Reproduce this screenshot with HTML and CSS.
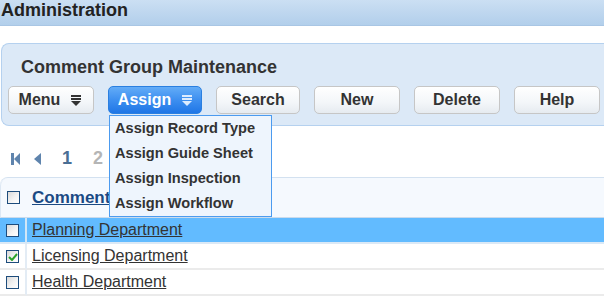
FILE: index.html
```html
<!DOCTYPE html>
<html lang="en">
<head>
    <meta charset="UTF-8">
    <title>Comment Group Maintenance</title>
    <link rel="stylesheet" href="styles.css">
</head>
<body>
    <div class="page-header">Administration</div>

    <div class="panel">
        <h2 class="panel-title">Comment Group Maintenance</h2>
        <div class="toolbar">
            <button class="btn btn-menu">Menu <svg class="caret" width="10" height="11" viewBox="0 0 10 11"><rect x="0" y="0" width="10" height="2"/><rect x="0" y="3" width="10" height="2"/><polygon points="0,6 10,6 5,11"/></svg></button>
            <div class="btn-wrap">
                <button class="btn btn-assign">Assign <svg class="caret" width="10" height="11" viewBox="0 0 10 11"><rect x="0" y="0" width="10" height="2"/><rect x="0" y="3" width="10" height="2"/><polygon points="0,6 10,6 5,11"/></svg></button>
                <ul class="dropdown">
                    <li>Assign Record Type</li>
                    <li>Assign Guide Sheet</li>
                    <li>Assign Inspection</li>
                    <li>Assign Workflow</li>
                </ul>
            </div>
            <button class="btn btn-search">Search</button>
            <button class="btn">New</button>
            <button class="btn">Delete</button>
            <button class="btn">Help</button>
        </div>
    </div>

    <div class="pager">
        <svg class="pg-icon" width="9" height="12" viewBox="0 0 9 12"><rect x="0" y="0" width="3" height="12"/><polygon points="9,0 9,12 3,6"/></svg>
        <svg class="pg-icon pg-prev" width="7" height="12" viewBox="0 0 7 12"><polygon points="7,0 7,12 0,6"/></svg>
        <span class="pg-num current">1</span>
        <span class="pg-num">2</span>
    </div>

    <table class="grid">
        <thead>
            <tr>
                <th class="col-check"><span class="checkbox"></span></th>
                <th><a href="#">Comment Group Name</a></th>
            </tr>
        </thead>
        <tbody>
            <tr class="selected">
                <td class="col-check"><span class="checkbox"></span></td>
                <td><a href="#">Planning Department</a></td>
            </tr>
            <tr>
                <td class="col-check"><span class="checkbox checked"><svg width="10" height="8" viewBox="0 0 10 8"><polyline points="1,4 4,7 9,1"/></svg></span></td>
                <td><a href="#">Licensing Department</a></td>
            </tr>
            <tr>
                <td class="col-check"><span class="checkbox"></span></td>
                <td><a href="#">Health Department</a></td>
            </tr>
        </tbody>
    </table>
</body>
</html>
```

FILE: styles.css
```css
* {
    margin: 0;
    padding: 0;
    box-sizing: border-box;
}

body {
    font-family: 'Liberation Sans', Arial, sans-serif;
    color: #333;
    background: white;
    width: 604px;
    overflow: hidden;
}

.page-header {
    height: 26px;
    padding-left: 1px;
    line-height: 20px;
    font-size: 18px;
    font-weight: bold;
    color: #222;
    background: linear-gradient(#cbdff3 0%, #bcd5ee 60%, #b2cfeb 100%);
    border-bottom: 1px solid #a9c6e4;
}

.panel {
    margin: 17px 0 0 1px;
    padding: 13px 0 11px 6px;
    background: #dce9f7;
    border: 1px solid #b5d1ef;
    border-right: none;
    border-radius: 8px 0 0 8px;
}

.panel-title {
    padding-left: 13px;
    font-size: 18px;
    line-height: 20px;
    font-weight: bold;
    color: #333;
    margin-bottom: 9px;
}

.toolbar {
    display: flex;
    gap: 14px;
}

.btn-wrap {
    position: relative;
}

.btn {
    height: 28px;
    width: 86px;
    font-family: inherit;
    font-size: 16px;
    font-weight: bold;
    color: #333;
    background: linear-gradient(#ffffff 0%, #f3f6f9 60%, #e6ebf0 100%);
    border: 1px solid #c6c6c6;
    border-radius: 5px;
    display: flex;
    align-items: center;
    justify-content: center;
    gap: 11px;
}

.btn-menu {
    padding-right: 2px;
}

.btn-assign {
    width: 94px;
    color: white;
    background: linear-gradient(#63acf7 0%, #3d8ff0 50%, #1f76e6 100%);
    border-color: #2a7fe0;
}

.btn-search {
    width: 84px;
}

.caret {
    fill: #333;
}

.btn-assign .caret {
    fill: #dcecff;
}

.dropdown {
    position: absolute;
    top: 29px;
    left: 1px;
    width: 163px;
    list-style: none;
    background: #eef5fd;
    border: 1px solid #4c9bef;
    padding: 0 0 0 5px;
    z-index: 10;
}

.dropdown li {
    height: 25px;
    line-height: 25px;
    font-size: 14.6px;
    font-weight: bold;
    color: #333;
    white-space: nowrap;
}

.pager {
    display: flex;
    align-items: center;
    height: 51px;
    padding: 14px 0 0 11px;
}

.pg-icon {
    fill: #5f84ad;
}

.pg-prev {
    margin-left: 14px;
}

.pg-num {
    font-size: 18px;
    font-weight: bold;
    color: #b5b5b5;
    margin-left: 21px;
}

.pg-num.current {
    color: #4a6e94;
}

.grid {
    width: 100%;
    border-collapse: separate;
    border-spacing: 0;
    border-top: 1px solid #d3e1f0;
    border-radius: 8px 0 0 0;
}

.grid th {
    height: 40px;
    background: #f5f9fe;
    text-align: left;
    border-bottom: 1px solid #cbdbec;
}

.grid th:first-child {
    border-top-left-radius: 8px;
    border-left: 1px solid #dde8f4;
}

.grid th a {
    font-size: 17px;
    font-weight: bold;
    color: #1b4a84;
}

.grid td {
    height: 26px;
    font-size: 16px;
    border-bottom: 2px solid #ebebeb;
}

.grid td a {
    color: #333;
}

.grid .col-check {
    width: 27px;
    padding-left: 6px;
    border-right: 2px solid #e3ecf5;
}

.grid th.col-check {
    border-right: none;
}

.grid tr.selected td {
    background: #62bbff;
    border-bottom-color: #dbe9f6;
}

.grid tr.selected .col-check {
    border-right-color: #d0e6f7;
}

.grid td:not(.col-check), .grid th:not(.col-check) {
    padding-left: 5px;
}

.checkbox {
    display: block;
    width: 13px;
    height: 13px;
    border: 1px solid #1d4c7c;
    background: linear-gradient(135deg, #d9d9d9 0%, #f3f3f3 55%, #ffffff 100%);
    position: relative;
}

.checkbox svg {
    position: absolute;
    left: 1px;
    top: 2px;
    fill: none;
    stroke: #2ba32b;
    stroke-width: 2;
}
```
